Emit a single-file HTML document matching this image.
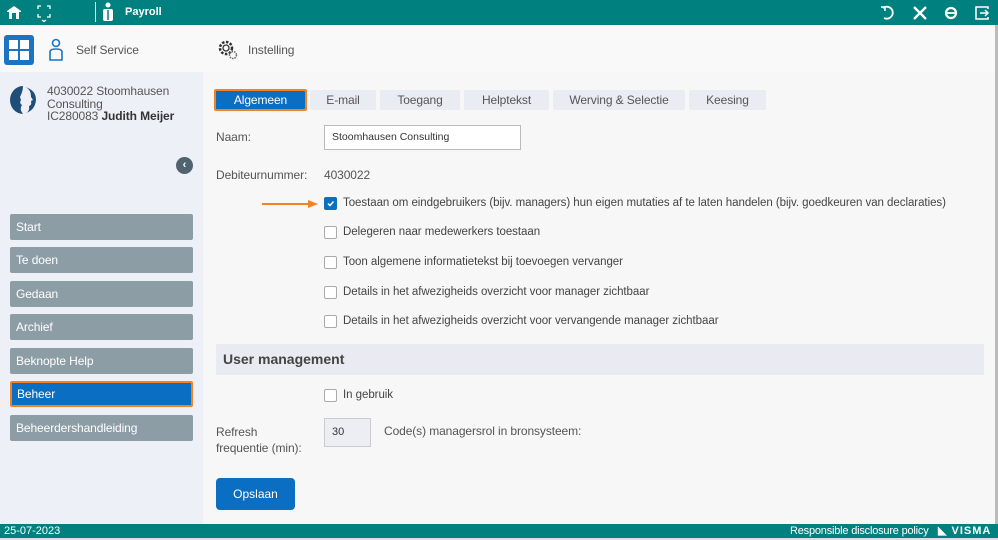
<!DOCTYPE html>
<html><head><style>
*{margin:0;padding:0;box-sizing:border-box}
body{width:998px;height:540px;position:relative;overflow:hidden;font-family:"Liberation Sans",sans-serif;background:#fff;color:#444;font-size:12px;white-space:nowrap}
.a{position:absolute}
.top{left:0;top:0;width:998px;height:25px;background:#00817f}
.hdr{left:0;top:25px;width:996px;height:47px;background:#f9f9fa}
.side{left:0;top:72px;width:203px;height:452px;background:#eef0f8}
.main{left:203px;top:72px;width:792px;height:452px;background:#f7f7f7}
.rb{left:995px;top:25px;width:3px;height:500px;background:#bbb}
.btn{position:absolute;left:10px;width:183px;height:26px;background:#8d9da5;color:#fff;font-size:12px;letter-spacing:-0.1px;line-height:26px;padding-left:6px;border-radius:2px}
.tab{position:absolute;top:90px;height:20px;background:#eaecf3;color:#555;font-size:12px;letter-spacing:-0.1px;line-height:20px;text-align:center;border-radius:2px}
.cb{position:absolute;left:324px;width:13px;height:13px;border:1px solid #aaa;background:#fff;border-radius:2px}
.ct{position:absolute;left:343px;font-size:11.5px;letter-spacing:-0.05px;color:#444}
.t{font-size:12px;letter-spacing:-0.1px;color:#555}
.foot{left:0;top:524px;width:998px;height:14px;background:#00817f;color:#fff;font-size:11px;line-height:14px}
</style></head><body>
<div class="a top"></div>
<svg class="a" style="left:6px;top:4px" width="16" height="16" viewBox="0 0 16 16"><path d="M1 7L8 2L15 7V8H13V15H3V8H1Z" fill="#fff"/><rect x="6" y="9" width="4" height="6" fill="#00817f"/></svg>
<svg class="a" style="left:36px;top:4px" width="16" height="18" viewBox="0 0 16 18"><path d="M5 2H2V5M11 2H14V5M2 10V13H5M14 10V13H11M6 16L8 17.5L10 16" stroke="#fff" stroke-width="1.3" fill="none"/></svg>
<div class="a" style="left:95px;top:2px;width:1px;height:20px;background:#cfe"></div>
<svg class="a" style="left:102px;top:2px" width="12" height="20" viewBox="0 0 12 20"><circle cx="6" cy="3" r="2.5" fill="#fff"/><rect x="1" y="7" width="10" height="12" rx="2" fill="#fff"/><path d="M6 8V18" stroke="#00817f" stroke-width="1.5"/></svg>
<div class="a" style="left:125px;top:6px;color:#fff;font-size:11px;font-weight:bold">Payroll</div>
<svg class="a" style="left:880px;top:4px" width="110" height="18" viewBox="0 0 110 18"><path d="M3 4A6 6 0 1 1 4 14" stroke="#fff" stroke-width="1.8" fill="none"/><path d="M1 3H5V7" stroke="#fff" stroke-width="1.5" fill="none"/><path d="M34 3L46 15M46 3L34 15" stroke="#fff" stroke-width="2.3"/><circle cx="71" cy="9" r="5" stroke="#fff" stroke-width="2.2" fill="none"/><path d="M67 9H75" stroke="#fff" stroke-width="1.8"/><path d="M108 5V3H96V15H108V13M100 9H108M105 6L108 9L105 12" stroke="#fff" stroke-width="1.5" fill="none"/></svg>
<div class="a hdr"></div>
<div class="a" style="left:4px;top:35px;width:30px;height:30px;background:#1a73c3;border-radius:3px"></div>
<svg class="a" style="left:8px;top:39px" width="22" height="22"><rect x="1" y="1" width="9" height="9" fill="#fff"/><rect x="12" y="1" width="9" height="9" fill="#fff"/><rect x="1" y="12" width="9" height="9" fill="#fff"/><rect x="12" y="12" width="9" height="9" fill="#fff"/></svg>
<svg class="a" style="left:48px;top:38px" width="16" height="24" viewBox="0 0 16 24"><circle cx="8" cy="5" r="3.5" stroke="#1a73c3" stroke-width="1.6" fill="none"/><path d="M2 22V14Q2 11 8 11Q14 11 14 14V22Z" stroke="#1a73c3" stroke-width="1.6" fill="none"/></svg>
<div class="a t" style="left:76px;top:43px">Self Service</div>
<svg class="a" style="left:217px;top:39px" width="22" height="22" viewBox="0 0 22 22"><circle cx="9" cy="9" r="6" stroke="#333" stroke-width="2.5" fill="none" stroke-dasharray="2.5 1.5"/><circle cx="9" cy="9" r="3" stroke="#333" stroke-width="1.3" fill="none"/><circle cx="16" cy="16" r="3.5" stroke="#666" stroke-width="1.5" fill="none" stroke-dasharray="1.5 1"/></svg>
<div class="a t" style="left:248px;top:43px">Instelling</div>
<div class="a side"></div>
<div class="a main"></div>
<div class="a rb"></div>
<svg class="a" style="left:9px;top:85px" width="28" height="30" viewBox="0 0 28 30"><path d="M14 1A13 14 0 1 0 14 29Q10 24 13 20Q10 18 12 15L11 12Q14 6 14 1Z" fill="#1f4e79"/><path d="M16 2Q22 4 22 12L24 15L22 16Q23 20 20 21Q21 26 17 28Q26 25 27 15Q27 5 16 2Z" fill="#1f4e79"/></svg>
<div class="a" style="left:47px;top:85px;font-size:12px;letter-spacing:-0.1px;line-height:12.5px;color:#555">4030022 Stoomhausen<br>Consulting<br>IC280083 <b style="color:#333">Judith Meijer</b></div>
<div class="a" style="left:176px;top:157px;width:17px;height:17px;border-radius:50%;background:#506470;color:#fff;font-size:11px;text-align:center;line-height:16px;font-weight:bold">‹</div>
<div class="btn" style="top:214px">Start</div>
<div class="btn" style="top:247px">Te doen</div>
<div class="btn" style="top:281px">Gedaan</div>
<div class="btn" style="top:314px">Archief</div>
<div class="btn" style="top:348px">Beknopte Help</div>
<div class="btn" style="top:381px;background:#0a6fc2;border:2px solid #f58220;line-height:22px;padding-left:5px">Beheer</div>
<div class="btn" style="top:415px">Beheerdershandleiding</div>
<div class="tab" style="left:214px;top:89px;width:93px;height:22px;background:#0a6fc2;color:#fff;border:2px solid #f58220;line-height:18px">Algemeen</div>
<div class="tab" style="left:310px;width:66px">E-mail</div>
<div class="tab" style="left:380px;width:80px">Toegang</div>
<div class="tab" style="left:464px;width:85px">Helptekst</div>
<div class="tab" style="left:553px;width:132px">Werving &amp; Selectie</div>
<div class="tab" style="left:689px;width:77px">Keesing</div>
<div class="a t" style="left:216px;top:130px">Naam:</div>
<div class="a" style="left:324px;top:125px;width:197px;height:25px;border:1px solid #bbb;background:#fff;font-size:10.5px;line-height:23px;padding-left:7px;color:#333">Stoomhausen Consulting</div>
<div class="a t" style="left:216px;top:168px">Debiteurnummer:</div>
<div class="a t" style="left:324px;top:168px">4030022</div>
<svg class="a" style="left:262px;top:199px" width="56" height="10"><path d="M0 5H48" stroke="#f58220" stroke-width="2"/><path d="M46 1L56 5L46 9Z" fill="#f58220"/></svg>
<div class="cb" style="top:197px;background:#0a6fc2;border-color:#0a6fc2"><svg width="11" height="11" style="display:block"><path d="M3 5.5L5 7.5L8.5 3.5" stroke="#fff" stroke-width="1.5" fill="none"/></svg></div>
<div class="ct" style="top:197px">Toestaan om eindgebruikers (bijv. managers) hun eigen mutaties af te laten handelen (bijv. goedkeuren van declaraties)</div>
<div class="cb" style="top:226px"></div><div class="ct" style="top:226px">Delegeren naar medewerkers toestaan</div>
<div class="cb" style="top:256px"></div><div class="ct" style="top:256px">Toon algemene informatietekst bij toevoegen vervanger</div>
<div class="cb" style="top:286px"></div><div class="ct" style="top:286px">Details in het afwezigheids overzicht voor manager zichtbaar</div>
<div class="cb" style="top:315px"></div><div class="ct" style="top:315px">Details in het afwezigheids overzicht voor vervangende manager zichtbaar</div>
<div class="a" style="left:216px;top:344px;width:768px;height:31px;background:#e9eaf2;font-size:14px;font-weight:bold;color:#444;line-height:31px;padding-left:7px">User management</div>
<div class="cb" style="top:389px"></div><div class="ct" style="top:389px">In gebruik</div>
<div class="a t" style="left:216px;top:424px;line-height:16px">Refresh<br>frequentie (min):</div>
<div class="a" style="left:324px;top:418px;width:47px;height:29px;border:1px solid #ccc;background:#eceef3;font-size:11px;line-height:27px;padding-left:7px;color:#333">30</div>
<div class="a t" style="left:384px;top:424px">Code(s) managersrol in bronsysteem:</div>
<div class="a" style="left:216px;top:478px;width:79px;height:32px;background:#0a6fc2;border-radius:4px;color:#fff;font-size:12px;text-align:center;line-height:32px">Opslaan</div>
<div class="a foot"><span style="position:absolute;left:4px">25-07-2023</span><span style="position:absolute;left:790px;letter-spacing:-0.2px">Responsible disclosure policy</span><span style="position:absolute;left:938px;font-weight:bold;letter-spacing:1px">◣ VISMA</span></div>
<div class="a" style="left:0;top:538px;width:998px;height:2px;background:#ddd"></div>
</body></html>
